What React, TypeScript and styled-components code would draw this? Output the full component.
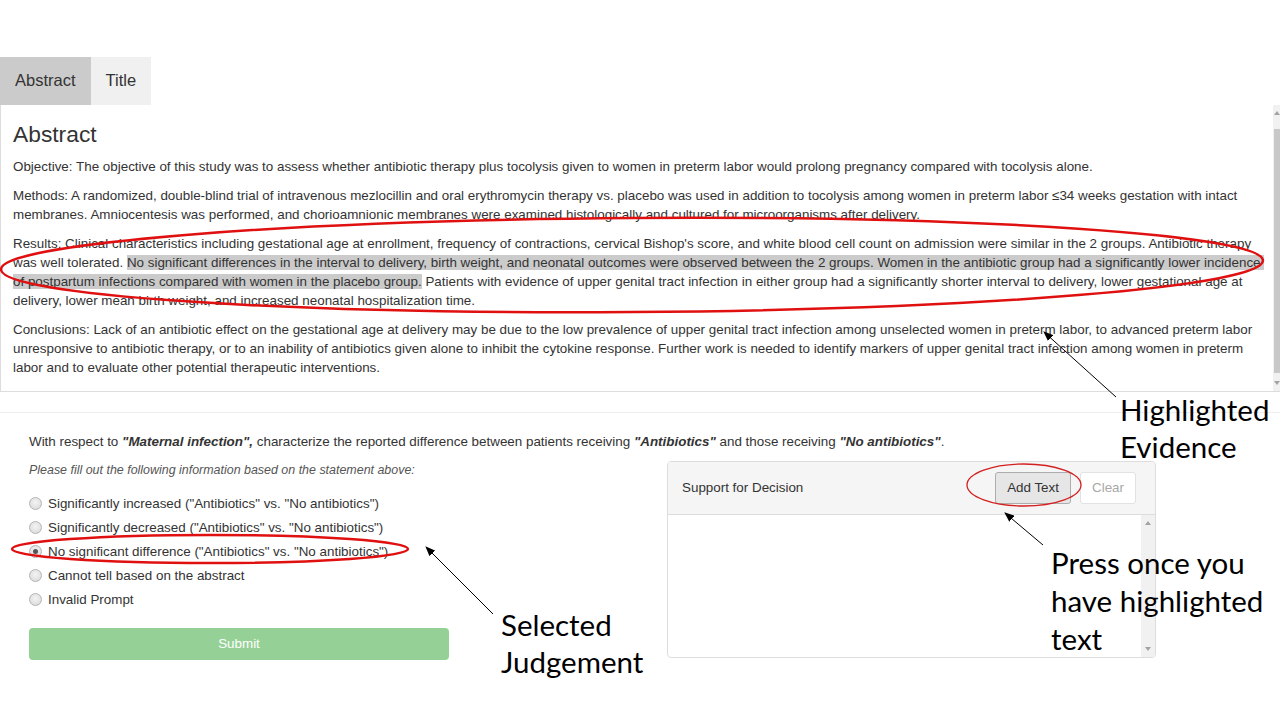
import * as React from "react";
import styled, { createGlobalStyle } from "styled-components";

const GlobalStyle = createGlobalStyle`
    html, body {
        margin: 0;
        padding: 0;
        background: #ffffff;
    }
    body {
        font-family: "Liberation Sans", Arial, sans-serif;
        color: #333333;
        overflow: hidden;
    }
`;

const Page = styled.div`
    position: relative;
    width: 1280px;
    height: 720px;
    padding-top: 57px;
    box-sizing: border-box;
    overflow: hidden;
`;

const TabBar = styled.div`
    display: flex;
`;

const Tab = styled.div<{ $active?: boolean }>`
    height: 48px;
    padding: 0 15px 2px;
    box-sizing: border-box;
    display: flex;
    align-items: center;
    font-size: 16.5px;
    color: #333;
    background: ${p => (p.$active ? "#cbcbcb" : "#f0f0f0")};
`;

const AbstractPanel = styled.div`
    display: flex;
    height: 287px;
    box-sizing: border-box;
    border-left: 1px solid #dddddd;
    border-bottom: 1px solid #dddddd;
`;

const PanelBody = styled.div`
    flex: 1;
    padding: 0 12px;
    overflow: hidden;

    h3 {
        margin: 17px 0 9.5px;
        font-size: 22.8px;
        font-weight: 400;
        line-height: 25px;
        color: #333;
    }
`;

const Para = styled.p`
    margin: 0 0 10px;
    font-size: 13.4px;
    line-height: 19px;
    white-space: nowrap;
`;

const Mark = styled.span`
    background: #cbcbcb;
`;

const Scrollbar = styled.div<{ $width: number }>`
    width: ${p => p.$width}px;
    background: #f1f1f1;
    display: flex;
    flex-direction: column;
    align-items: center;
    padding: 6px 0;
    box-sizing: border-box;
`;

const Arrow = styled.div<{ $down?: boolean }>`
    width: 0;
    height: 0;
    border-left: 3px solid transparent;
    border-right: 3px solid transparent;
    ${p =>
        p.$down
            ? "border-top: 4px solid #a3a3a3;"
            : "border-bottom: 4px solid #a3a3a3;"}
`;

const Thumb = styled.div`
    flex: 1;
    align-self: stretch;
    margin: 14px 0 8px 1px;
    background: #c8c8c8;
`;

const Spacer = styled.div`
    flex: 1;
`;

const Divider = styled.div`
    height: 1px;
    margin-top: 20px;
    background: #eeeeee;
`;

const Section = styled.div`
    padding-left: 29px;
`;

const Prompt = styled.p`
    margin: 18.5px 0 0;
    font-size: 13.4px;
    line-height: 19px;

    b {
        font-style: italic;
    }
`;

const Row = styled.div`
    display: flex;
    align-items: flex-start;
`;

const LeftCol = styled.div`
    width: 420px;
`;

const Instruction = styled.p`
    margin: 10px 0 0;
    font-size: 12.45px;
    line-height: 19px;
    font-style: italic;
    color: #555;
`;

const RadioList = styled.div`
    margin-top: 12px;
`;

const RadioRow = styled.label`
    height: 24px;
    display: flex;
    align-items: center;
    font-size: 13.4px;
    color: #333;
`;

const RadioDot = styled.span<{ $checked?: boolean }>`
    width: 11px;
    height: 11px;
    margin: 0 6px 0 0;
    border-radius: 50%;
    border: 1px solid #b4b4b4;
    background: radial-gradient(circle at 50% 40%, #f4f4f4, #d6d6d6);
    display: flex;
    align-items: center;
    justify-content: center;

    &::after {
        content: "";
        width: 5px;
        height: 5px;
        border-radius: 50%;
        background: ${p => (p.$checked ? "#555" : "transparent")};
    }
`;

const SubmitButton = styled.button`
    margin-top: 16px;
    width: 420px;
    height: 32px;
    border: none;
    border-radius: 4px;
    background: #95d196;
    color: #ffffff;
    font-family: "Liberation Sans", Arial, sans-serif;
    font-size: 13.4px;
`;

const SupportPanel = styled.div`
    margin: 10px 0 0 218px;
    width: 489px;
    height: 197px;
    box-sizing: border-box;
    border: 1px solid #dddddd;
    border-radius: 4px;
    display: flex;
    flex-direction: column;
    overflow: hidden;
`;

const PanelHeader = styled.div`
    height: 53px;
    box-sizing: border-box;
    background: #f5f5f5;
    border-bottom: 1px solid #dddddd;
    display: flex;
    align-items: center;
    gap: 9px;
    padding: 0 19px 0 14px;
    font-size: 13.4px;

    .title {
        flex: 1;
    }
`;

const Btn = styled.button<{ $disabled?: boolean }>`
    height: 32px;
    padding: 0 11px;
    border-radius: 3px;
    font-family: "Liberation Sans", Arial, sans-serif;
    font-size: 13.4px;
    border: 1px solid ${p => (p.$disabled ? "#e2e2e2" : "#adadad")};
    background: ${p => (p.$disabled ? "#ffffff" : "#e6e6e6")};
    color: ${p => (p.$disabled ? "#a8a8a8" : "#333333")};
`;

const PanelText = styled.div`
    flex: 1;
    display: flex;
    justify-content: flex-end;
`;

const Callout = styled.div<{ $left: number; $top: number; $lh: number }>`
    position: absolute;
    left: ${p => p.$left}px;
    top: ${p => p.$top}px;
    font-family: Lato, "Noto Sans", sans-serif;
    font-size: 29.5px;
    line-height: ${p => p.$lh}px;
    color: #000;
    white-space: nowrap;
`;

const Overlay = styled.svg`
    position: absolute;
    left: 0;
    top: 0;
    pointer-events: none;
`;

const options = [
    'Significantly increased ("Antibiotics" vs. "No antibiotics")',
    'Significantly decreased ("Antibiotics" vs. "No antibiotics")',
    'No significant difference ("Antibiotics" vs. "No antibiotics")',
    "Cannot tell based on the abstract",
    "Invalid Prompt",
];

export default function App() {
    return (
        <Page>
            <GlobalStyle />
            <TabBar>
                <Tab $active>Abstract</Tab>
                <Tab>Title</Tab>
            </TabBar>
            <AbstractPanel>
                <PanelBody>
                    <h3>Abstract</h3>
                    <Para>
                        Objective: The objective of this study was to assess whether antibiotic therapy plus tocolysis given to women in preterm labor would prolong pregnancy compared with tocolysis alone.
                    </Para>
                    <Para>
                        Methods: A randomized, double-blind trial of intravenous mezlocillin and oral erythromycin therapy vs. placebo was used in addition to tocolysis among women in preterm labor ≤34 weeks gestation with intact
                        <br />
                        membranes. Amniocentesis was performed, and chorioamnionic membranes were examined histologically and cultured for microorganisms after delivery.
                    </Para>
                    <Para>
                        Results: Clinical characteristics including gestational age at enrollment, frequency of contractions, cervical Bishop's score, and white blood cell count on admission were similar in the 2 groups. Antibiotic therapy
                        <br />
                        was well tolerated.{" "}
                        <Mark>
                            No significant differences in the interval to delivery, birth weight, and neonatal outcomes were observed between the 2 groups. Women in the antibiotic group had a significantly lower incidence&nbsp;
                        </Mark>
                        <br />
                        <Mark>of postpartum infections compared with women in the placebo group.</Mark>{" "}
                        Patients with evidence of upper genital tract infection in either group had a significantly shorter interval to delivery, lower gestational age at
                        <br />
                        delivery, lower mean birth weight, and increased neonatal hospitalization time.
                    </Para>
                    <Para>
                        Conclusions: Lack of an antibiotic effect on the gestational age at delivery may be due to the low prevalence of upper genital tract infection among unselected women in preterm labor, to advanced preterm labor
                        <br />
                        unresponsive to antibiotic therapy, or to an inability of antibiotics given alone to inhibit the cytokine response. Further work is needed to identify markers of upper genital tract infection among women in preterm
                        <br />
                        labor and to evaluate other potential therapeutic interventions.
                    </Para>
                </PanelBody>
                <Scrollbar $width={7}>
                    <Arrow />
                    <Thumb />
                    <Arrow $down />
                </Scrollbar>
            </AbstractPanel>
            <Divider />
            <Section>
                <Prompt>
                    With respect to <b>"Maternal infection",</b> characterize the reported difference between patients receiving{" "}
                    <b>"Antibiotics"</b> and those receiving <b>"No antibiotics"</b>.
                </Prompt>
                <Row>
                    <LeftCol>
                        <Instruction>Please fill out the following information based on the statement above:</Instruction>
                        <RadioList>
                            {options.map((o, i) => (
                                <RadioRow key={i}>
                                    <RadioDot $checked={i === 2} />
                                    {o}
                                </RadioRow>
                            ))}
                        </RadioList>
                        <SubmitButton>Submit</SubmitButton>
                    </LeftCol>
                    <SupportPanel>
                        <PanelHeader>
                            <span className="title">Support for Decision</span>
                            <Btn>Add Text</Btn>
                            <Btn $disabled>Clear</Btn>
                        </PanelHeader>
                        <PanelText>
                            <Scrollbar $width={14}>
                                <Arrow />
                                <Spacer />
                                <Arrow $down />
                            </Scrollbar>
                        </PanelText>
                    </SupportPanel>
                </Row>
            </Section>

            <Callout $left={1120} $top={391} $lh={37}>
                Highlighted
                <br />
                Evidence
            </Callout>
            <Callout $left={501} $top={606} $lh={37}>
                Selected
                <br />
                Judgement
            </Callout>
            <Callout $left={1051} $top={544} $lh={38}>
                Press once you
                <br />
                have highlighted
                <br />
                text
            </Callout>

            <Overlay width={1280} height={720} viewBox="0 0 1280 720">
                <defs>
                    <marker id="head" markerWidth="10" markerHeight="8" refX="9" refY="4" orient="auto" markerUnits="userSpaceOnUse">
                        <path d="M0,0 L10,4 L0,8 Z" fill="#000" />
                    </marker>
                </defs>
                <ellipse cx="632" cy="265" rx="631" ry="47" fill="none" stroke="#e01010" strokeWidth="2.5" transform="rotate(-0.4 632 265)" />
                <ellipse cx="210" cy="549" rx="198" ry="14" fill="none" stroke="#e01010" strokeWidth="2.5" />
                <ellipse cx="1024" cy="485" rx="57" ry="21" fill="none" stroke="#d42020" strokeWidth="1.3" />
                <line x1="1116" y1="397" x2="1044" y2="332" stroke="#000" strokeWidth="1" markerEnd="url(#head)" />
                <line x1="493" y1="614" x2="426" y2="547" stroke="#000" strokeWidth="1" markerEnd="url(#head)" />
                <line x1="1043" y1="545" x2="1005" y2="513" stroke="#000" strokeWidth="1" markerEnd="url(#head)" />
            </Overlay>
        </Page>
    );
}
